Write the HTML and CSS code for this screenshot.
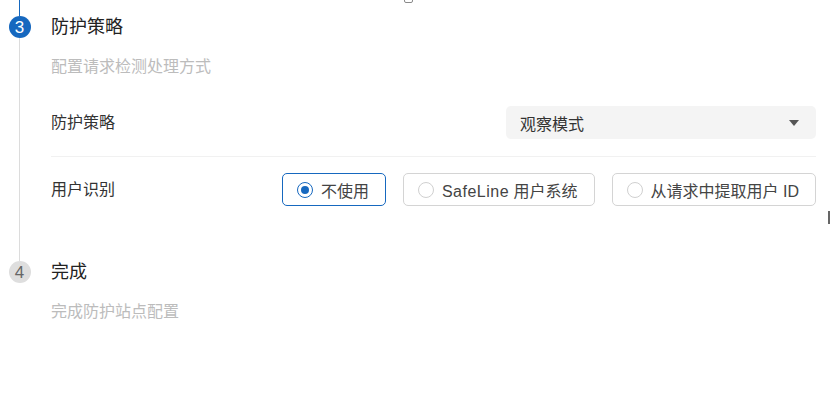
FILE: index.html
```html
<!DOCTYPE html>
<html lang="zh-CN">
<head>
<meta charset="utf-8">
<title>防护策略</title>
<link rel="stylesheet" href="styles.css">
</head>
<body>
<div class="page">
  <span class="top-checkbox"></span>
  <span class="edge-mark"></span>

  <section class="step step-active">
    <div class="rail">
      <span class="connector connector-done"></span>
      <span class="dot dot-active">3</span>
      <span class="connector connector-rest"></span>
    </div>
    <div class="content content-active">
      <h2 class="title">防护策略</h2>
      <p class="desc">配置请求检测处理方式</p>

      <div class="form">
        <div class="row row-divided">
          <span class="label">防护策略</span>
          <div class="select">
            <span class="select-value">观察模式</span>
            <span class="caret"></span>
          </div>
        </div>
        <div class="row">
          <span class="label">用户识别</span>
          <div class="radio-group">
            <label class="radio radio-checked"><span class="radio-dot"></span><span>不使用</span></label>
            <label class="radio"><span class="radio-dot"></span><span><span class="latin">SafeLine</span> 用户系统</span></label>
            <label class="radio"><span class="radio-dot"></span><span>从请求中提取用户 ID</span></label>
          </div>
        </div>
      </div>
    </div>
  </section>

  <section class="step">
    <div class="rail">
      <span class="dot dot-wait">4</span>
    </div>
    <div class="content">
      <h2 class="title">完成</h2>
      <p class="desc">完成防护站点配置</p>
    </div>
  </section>
</div>
</body>
</html>
```

FILE: styles.css
```css
* { box-sizing: border-box; }

html, body {
  margin: 0;
  padding: 0;
  background: #ffffff;
}

body {
  font-family: "Liberation Sans", "Noto Sans CJK SC", sans-serif;
  color: #333;
  width: 830px;
  height: 420px;
  overflow: hidden;
}

.page {
  position: relative;
  padding-right: 14px;
}

.top-checkbox {
  position: absolute;
  left: 404px;
  top: -7px;
  width: 9px;
  height: 10px;
  border: 1px solid #8a8a8a;
  border-radius: 2px;
}

.edge-mark {
  position: absolute;
  left: 828px;
  top: 211px;
  width: 2px;
  height: 13px;
  background: #666;
}

.step {
  display: flex;
}

.rail {
  width: 39px;
  flex: none;
  display: flex;
  flex-direction: column;
  align-items: center;
}

.connector {
  width: 1px;
  display: block;
}

.connector-done {
  height: 16px;
  background: #1668bf;
}

.connector-rest {
  flex: 1;
  background: #dcdcdc;
}

.dot {
  width: 22px;
  height: 22px;
  border-radius: 50%;
  display: flex;
  align-items: center;
  justify-content: center;
  font-size: 17px;
  line-height: 1;
  flex: none;
}

.dot-active {
  background: #1668bf;
  color: #fff;
}

.dot-wait {
  background: #dedede;
  color: #666;
}

.content {
  flex: 1;
  padding-left: 12px;
}

.content-active {
  padding-top: 16px;
  padding-bottom: 55px;
}

.title {
  margin: 0;
  font-size: 18px;
  line-height: 22px;
  font-weight: 400;
  color: #222;
}

.desc {
  margin: 18px 0 0;
  font-size: 16px;
  line-height: 22px;
  color: #bcbcbc;
}

.form {
  margin-top: 28px;
}

.row {
  display: flex;
  align-items: center;
  justify-content: space-between;
}

.row-divided {
  padding-bottom: 17px;
  border-bottom: 1px solid #f1f1f1;
  margin-bottom: 16px;
}

.label {
  font-size: 16px;
  line-height: 22px;
  color: #333;
}

.select {
  width: 310px;
  height: 33px;
  background: #f4f4f4;
  border-radius: 5px;
  display: flex;
  align-items: center;
  justify-content: space-between;
  padding: 0 17px 0 14px;
}

.select-value {
  font-size: 16px;
  color: #333;
}

.caret {
  width: 0;
  height: 0;
  border-left: 5px solid transparent;
  border-right: 5px solid transparent;
  border-top: 6px solid #555;
}

.radio-group {
  display: flex;
  gap: 17px;
}

.radio {
  height: 33px;
  display: flex;
  align-items: center;
  gap: 8px;
  padding: 0 16px 0 14px;
  border: 1px solid #d4d4d4;
  border-radius: 5px;
  font-size: 16px;
  color: #444;
}

.latin {
  letter-spacing: 0.5px;
}

.radio-dot {
  width: 16px;
  height: 16px;
  border-radius: 50%;
  border: 1px solid #d0d0d0;
  display: flex;
  align-items: center;
  justify-content: center;
  flex: none;
}

.radio-checked {
  border-color: #1668bf;
}

.radio-checked .radio-dot {
  border-color: #1668bf;
}

.radio-checked .radio-dot::after {
  content: "";
  width: 8px;
  height: 8px;
  border-radius: 50%;
  background: #1668bf;
}
```
